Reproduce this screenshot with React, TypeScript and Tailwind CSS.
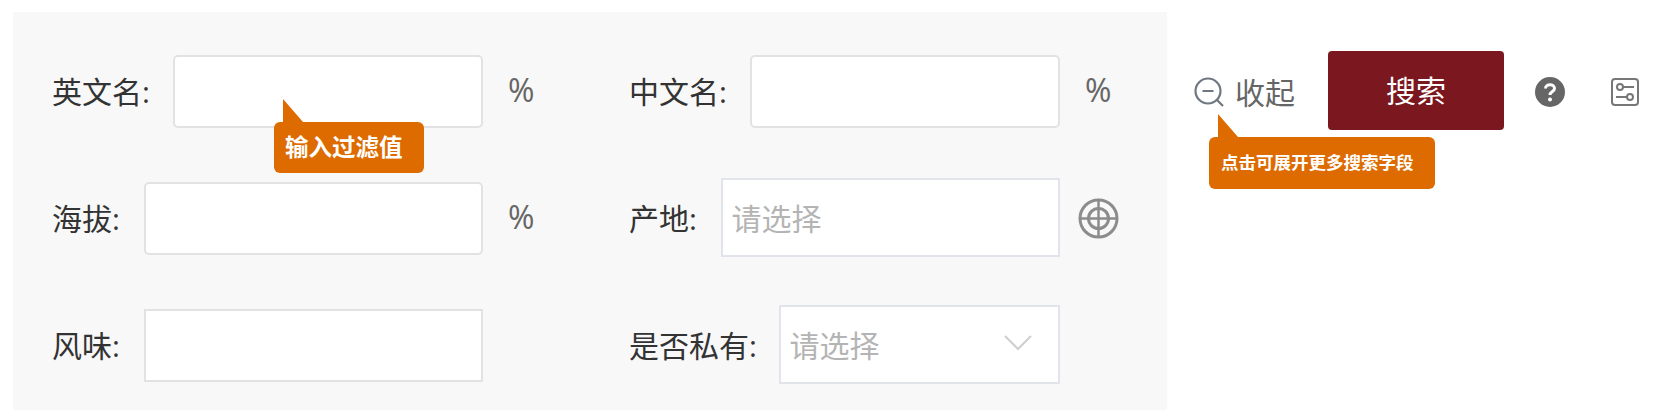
const font = "[font-family:'Open_Sans','Noto_Sans_CJK_SC',sans-serif]";

function Tip({ text, className }: { text: string; className: string }) {
  return (
    <div className={`absolute z-10 rounded-[6px] bg-[#dd6b00] font-bold text-white ${className}`}>
      <svg className="absolute left-[9px] top-[-23px]" width="20" height="24" viewBox="0 0 20 24">
        <path d="M0 0 L20 23 L20 24 L0 24 Z" fill="#dd6b00" />
      </svg>
      {text}
    </div>
  );
}

function TextInput({ square }: { square?: boolean }) {
  return (
    <input
      type="text"
      className={`h-[73px] min-w-0 flex-1 border-2 border-[#e2e2e2] bg-white ${square ? "" : "rounded-[5px]"}`}
    />
  );
}

function Field({ label, gap, children, suffix }: { label: string; gap: string; children: React.ReactNode; suffix?: React.ReactNode }) {
  return (
    <div className="flex h-[127px] items-center">
      <div className="relative flex w-[431px] items-center">
        <span className={`text-[30px] leading-none text-[#333] ${gap}`}>{label}</span>
        {children}
      </div>
      {suffix}
    </div>
  );
}

function Percent() {
  return <span className="mb-[3px] ml-[25px] text-[32px] leading-none text-[#666]">%</span>;
}

function Placeholder({ chevron }: { chevron?: boolean }) {
  return (
    <div className="mb-[3px] flex h-[79px] min-w-0 flex-1 items-center justify-between border-2 border-[#e1e4ea] bg-white pl-[8.5px] pr-[26px] pt-[3px] text-[30px] text-[#b4b4b4]">
      <span>请选择</span>
      {chevron && (
        <svg className="mb-[6px]" width="28" height="16" viewBox="0 0 28 16" fill="none" stroke="#cfcfcf" strokeWidth="2">
          <path d="M1 1 L14 14 L27 1" />
        </svg>
      )}
    </div>
  );
}

function Crosshair() {
  return (
    <svg className="ml-[18px]" width="41" height="41" viewBox="0 0 41 41" fill="none" stroke="#8c8c8c" strokeWidth="3">
      <circle cx="20.5" cy="20.5" r="18.5" />
      <circle cx="20.5" cy="20.5" r="10" />
      <path d="M20.5 1 V40 M1 20.5 H40" strokeWidth="2.5" />
    </svg>
  );
}

export default function App() {
  return (
    <div className={`flex bg-white pl-[13px] pt-3 ${font}`}>
      <div className="grid h-[398px] w-[1154px] grid-cols-[577px_1fr] bg-[#f8f8f8] pl-[39px] pt-4">
        <div className="flex flex-col">
          <Field label="英文名:" gap="mr-[23px]" suffix={<Percent />}>
            <TextInput />
            <Tip text="输入过滤值" className="left-[222px] top-[67px] h-[51px] w-[150px] pl-[11px] pt-[9px] text-[23.5px] leading-[32px]" />
          </Field>
          <Field label="海拔:" gap="mr-[24px]" suffix={<Percent />}>
            <TextInput />
          </Field>
          <Field label="风味:" gap="mr-[24px]">
            <TextInput square />
          </Field>
        </div>
        <div className="flex flex-col">
          <Field label="中文名:" gap="mr-[23px]" suffix={<Percent />}>
            <TextInput />
          </Field>
          <Field label="产地:" gap="mr-[24px]" suffix={<Crosshair />}>
            <Placeholder />
          </Field>
          <Field label="是否私有:" gap="mr-[22px]">
            <Placeholder chevron />
          </Field>
        </div>
      </div>

      <div className="flex h-[117px] items-center self-start pl-[27px] pt-[39px]">
        <div className="relative flex items-center">
          <svg className="mt-[4px]" width="30" height="30" viewBox="0 0 30 30" fill="none" stroke="#6f7780" strokeWidth="2.2">
            <circle cx="14" cy="14" r="12.5" />
            <path d="M8.5 14 H19.5 M23 23 L29 29" />
          </svg>
          <span className="ml-[11px] mr-[1px] mt-[6px] text-[30px] leading-none text-[#666]">收起</span>
          <Tip text="点击可展开更多搜索字段" className="left-[15px] top-[65px] h-[52px] w-[226px] pl-[12px] pt-[12px] text-[17.5px] leading-[26px] whitespace-nowrap" />
        </div>
        <button className="ml-[32px] flex h-[79px] w-[176px] items-center justify-center rounded-[4px] bg-[#7b171e] text-[30px] text-white">
          搜索
        </button>
        <svg className="ml-[31px] mt-[3px]" width="30" height="30" viewBox="0 0 30 30">
          <circle cx="15" cy="15" r="15" fill="#666" />
          <path d="M10.5 11.5 C10.5 6.5 19.5 6.5 19.5 11.5 C19.5 14.5 15 14.5 15 18" fill="none" stroke="#fff" strokeWidth="3" />
          <circle cx="15" cy="22.5" r="2" fill="#fff" />
        </svg>
        <svg className="ml-[46px] mt-[3px]" width="28" height="28" viewBox="0 0 28 28" fill="none" stroke="#777" strokeWidth="2">
          <rect x="1" y="1" width="26" height="26" rx="3" />
          <circle cx="9" cy="9" r="3" />
          <circle cx="19" cy="19" r="3" />
          <path d="M12 9 H23 M5 19 H16" />
        </svg>
      </div>
    </div>
  );
}
